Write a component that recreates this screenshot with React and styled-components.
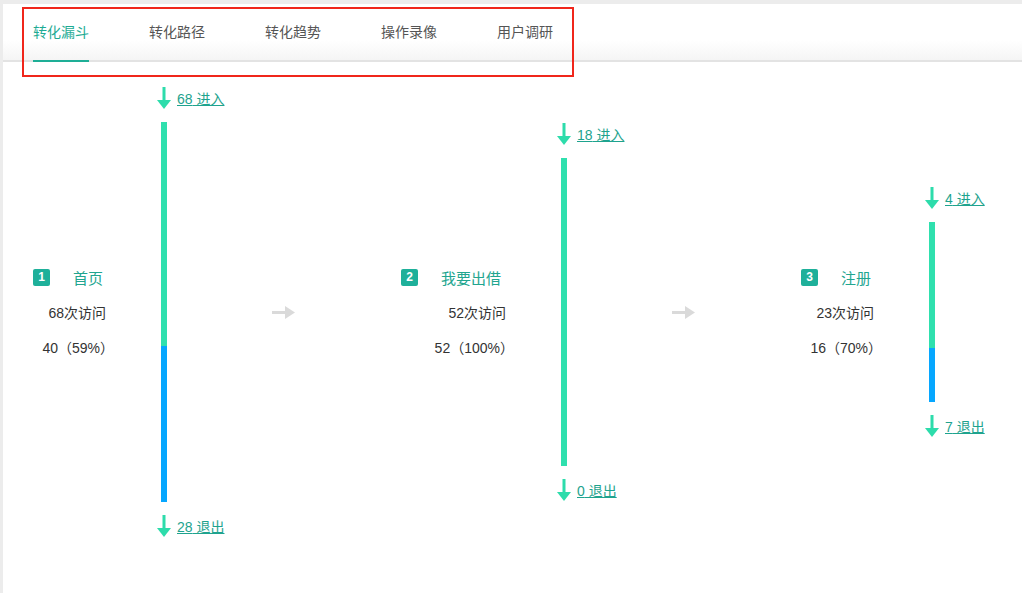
import React from "react";
import styled, { createGlobalStyle } from "styled-components";

const GlobalStyle = createGlobalStyle`
  html, body { margin: 0; padding: 0; background: #ececec; }
  body { font-family: "Liberation Sans", "Noto Sans CJK SC", sans-serif; }
  * { box-sizing: border-box; }
`;

const Page = styled.div`
  position: relative;
  margin: 4px 0 0 3px;
  min-height: 589px;
  background: #fff;
`;

const TabBar = styled.div`
  display: flex;
  gap: 60px;
  height: 58px;
  padding-left: 30px;
  background: linear-gradient(#fff 0%, #fff 65%, #f5f5f5 100%);
  border-bottom: 2px solid #e3e3e3;
`;

const Tab = styled.div`
  width: 56px;
  line-height: 54px;
  height: 58px;
  font-size: 14px;
  font-family: "Noto Sans CJK SC", sans-serif;
  color: ${(p) => (p.$active ? "#1eab94" : "#555")};
  border-bottom: 2px solid ${(p) => (p.$active ? "#1eae96" : "transparent")};
  white-space: nowrap;
`;

const Highlight = styled.div`
  position: absolute;
  left: 19px;
  top: 3px;
  width: 552px;
  height: 70px;
  border: 2px solid #f0261b;
  pointer-events: none;
`;

const Funnel = styled.div`
  display: flex;
  align-items: center;
  height: 500px;
  padding-left: 30px;
`;

const Step = styled.div`
  display: flex;
  align-items: center;
`;

const Label = styled.div`
  width: ${(p) => p.$w}px;
  padding-top: 10px;
  display: flex;
  flex-direction: column;
  align-items: flex-end;
  margin-right: 51px;
`;

const Header = styled.div`
  align-self: stretch;
  display: flex;
  align-items: center;
  gap: 23px;
  height: 17px;
`;

const Badge = styled.span`
  width: 17px;
  height: 17px;
  border-radius: 2px;
  background: #1eb09a;
  color: #fff;
  font-size: 12px;
  font-weight: bold;
  display: flex;
  align-items: center;
  justify-content: center;
`;

const Name = styled.span`
  font-family: "Noto Sans CJK SC", sans-serif;
  font-size: 15px;
  line-height: 17px;
  color: #22a58f;
  white-space: nowrap;
`;

const Stat = styled.div`
  font-size: 14px;
  line-height: 35px;
  color: #333;
  white-space: nowrap;
  margin-top: ${(p) => (p.$first ? "10px" : "0")};
  margin-right: ${(p) => (p.$paren ? "-8px" : "0")};
`;

const BarGroup = styled.div`
  width: 80px;
  display: flex;
  flex-direction: column;
  gap: 13px;
`;

const FlowRow = styled.div`
  display: flex;
  align-items: center;
  gap: 6px;
  height: 22px;
  padding-bottom: 1px;
`;

const FlowLink = styled.a`
  font-size: 14px;
  color: #1ea38e;
  text-decoration: underline;
  white-space: nowrap;
  cursor: pointer;
`;

const Bar = styled.div`
  margin-left: 4px;
  width: 6px;
  height: ${(p) => p.$h}px;
  background: linear-gradient(
    #2fe0ae 0%,
    #2fe0ae ${(p) => p.$pct}%,
    #06a7ff ${(p) => p.$pct}%,
    #06a7ff 100%
  );
`;

const Connector = styled.div`
  display: flex;
  margin: 0 106px 0 35px;
`;

const DownArrow = () => (
  <svg width="14" height="22" viewBox="0 0 14 22">
    <rect x="5.5" y="0" width="3" height="14" fill="#2ddcab" />
    <polygon points="0,13 14,13 7,22" fill="#2ddcab" />
  </svg>
);

const RightArrow = () => (
  <svg width="23" height="13" viewBox="0 0 23 13">
    <rect x="0" y="5" width="14" height="3" fill="#dadada" />
    <polygon points="13,0 23,6.5 13,13" fill="#dadada" />
  </svg>
);

const steps = [
  { n: 1, name: "首页", visits: "68次访问", conv: "40（59%）", w: 73, h: 380, pct: 59, inN: 68, outN: 28 },
  { n: 2, name: "我要出借", visits: "52次访问", conv: "52（100%）", w: 105, h: 308, pct: 100, inN: 18, outN: 0 },
  { n: 3, name: "注册", visits: "23次访问", conv: "16（70%）", w: 73, h: 180, pct: 70, inN: 4, outN: 7 },
];

const tabs = ["转化漏斗", "转化路径", "转化趋势", "操作录像", "用户调研"];

export default function App() {
  return (
    <>
      <GlobalStyle />
      <Page>
        <TabBar>
          {tabs.map((t, i) => (
            <Tab key={t} $active={i === 0}>
              {t}
            </Tab>
          ))}
        </TabBar>
        <Funnel>
          {steps.map((s, i) => (
            <React.Fragment key={s.n}>
              <Step>
                <Label $w={s.w}>
                  <Header>
                    <Badge>{s.n}</Badge>
                    <Name>{s.name}</Name>
                  </Header>
                  <Stat $first>{s.visits}</Stat>
                  <Stat $paren>{s.conv}</Stat>
                </Label>
                <BarGroup>
                  <FlowRow>
                    <DownArrow />
                    <FlowLink>{s.inN} 进入</FlowLink>
                  </FlowRow>
                  <Bar $h={s.h} $pct={s.pct} />
                  <FlowRow>
                    <DownArrow />
                    <FlowLink>{s.outN} 退出</FlowLink>
                  </FlowRow>
                </BarGroup>
              </Step>
              {i < steps.length - 1 && (
                <Connector>
                  <RightArrow />
                </Connector>
              )}
            </React.Fragment>
          ))}
        </Funnel>
        <Highlight />
      </Page>
    </>
  );
}
